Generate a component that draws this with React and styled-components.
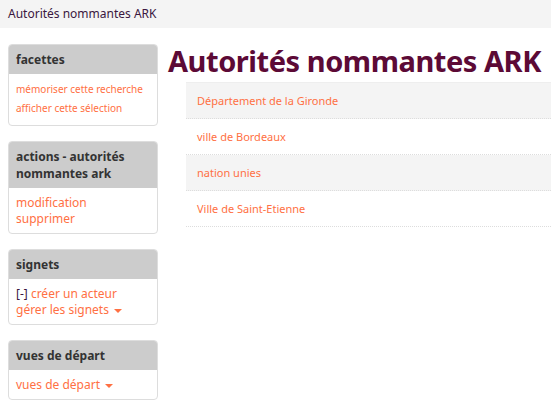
import styled, { createGlobalStyle } from "styled-components";

const GlobalStyle = createGlobalStyle`
  body {
    margin: 0;
    font-family: "Noto Sans", "Open Sans", sans-serif;
    background: white;
    color: #333;
  }
`;

const facets = ["mémoriser cette recherche", "afficher cette sélection"];
const authorities = [
  "Département de la Gironde",
  "ville de Bordeaux",
  "nation unies",
  "Ville de Saint-Etienne",
];

function App() {
  return (
    <>
      <GlobalStyle />
      <TopBar>Autorités nommantes ARK</TopBar>
      <Page>
        <Sidebar>
          <Box>
            <BoxHeader>facettes</BoxHeader>
            <BoxBody small>
              {facets.map((f) => (
                <Link key={f}>{f}</Link>
              ))}
            </BoxBody>
          </Box>
          <Box>
            <BoxHeader>actions - autorités nommantes ark</BoxHeader>
            <BoxBody>
              <Link>modification</Link>
              <Link>supprimer</Link>
            </BoxBody>
          </Box>
          <Box>
            <BoxHeader>signets</BoxHeader>
            <BoxBody>
              <Line>
                <Toggle>[-]</Toggle> <Link as="span">créer un acteur</Link>
              </Line>
              <Link>
                gérer les signets <Caret />
              </Link>
            </BoxBody>
          </Box>
          <Box>
            <BoxHeader>vues de départ</BoxHeader>
            <BoxBody>
              <Link>
                vues de départ <Caret />
              </Link>
            </BoxBody>
          </Box>
        </Sidebar>
        <Main>
          <Title>Autorités nommantes ARK</Title>
          <List>
            {authorities.map((a, i) => (
              <Row key={a} odd={i % 2 === 0}>
                <Link as="span">{a}</Link>
              </Row>
            ))}
          </List>
        </Main>
      </Page>
    </>
  );
}

export default App;

const TopBar = styled.div`
  height: 28px;
  line-height: 28px;
  background: #f4f4f4;
  padding-left: 8px;
  font-size: 12px;
  color: #3b1740;
`;

const Page = styled.div`
  display: flex;
  padding: 16px 0 0 8px;
  gap: 10px;
  overflow: hidden;
`;

const Sidebar = styled.div`
  width: 150px;
  flex-shrink: 0;
  display: flex;
  flex-direction: column;
  gap: 15px;
`;

const Box = styled.div`
  border: 1px solid #ddd;
  border-radius: 4px;
  overflow: hidden;
`;

const BoxHeader = styled.div`
  background: #ccc;
  padding: 6px 7px;
  font-size: 12px;
  font-weight: bold;
  line-height: 17px;
  color: #333;
`;

const BoxBody = styled.div`
  display: flex;
  flex-direction: column;
  padding: ${({ small }) => (small ? "6px 7px 7px" : "7px 7px 6px")};
  font-size: ${({ small }) => (small ? "10px" : "12px")};
  line-height: ${({ small }) => (small ? "19px" : "16px")};
`;

const Link = styled.a`
  color: #ff7043;
  text-decoration: none;
  cursor: pointer;
`;

const Line = styled.div``;

const Toggle = styled.span`
  color: #3b1740;
`;

const Caret = styled.span`
  display: inline-block;
  width: 0;
  height: 0;
  margin-left: 2px;
  vertical-align: middle;
  border-left: 4px solid transparent;
  border-right: 4px solid transparent;
  border-top: 4px solid #ff7043;
`;

const Main = styled.div`
  flex: 1;
  min-width: 0;
`;

const Title = styled.h1`
  margin: -5px 0 0;
  font-size: 29px;
  line-height: 43px;
  font-weight: bold;
  letter-spacing: -0.45px;
  color: #5c0a36;
  white-space: nowrap;
`;

const List = styled.div`
  margin-left: 18px;
  margin-right: -10px;
  border-top: 1px solid #eee;
`;

const Row = styled.div`
  height: 35px;
  display: flex;
  align-items: center;
  padding: 0 11px;
  font-size: 11px;
  background: ${({ odd }) => (odd ? "#f4f4f4" : "white")};
  border-bottom: 1px dotted #ddd;
`;
